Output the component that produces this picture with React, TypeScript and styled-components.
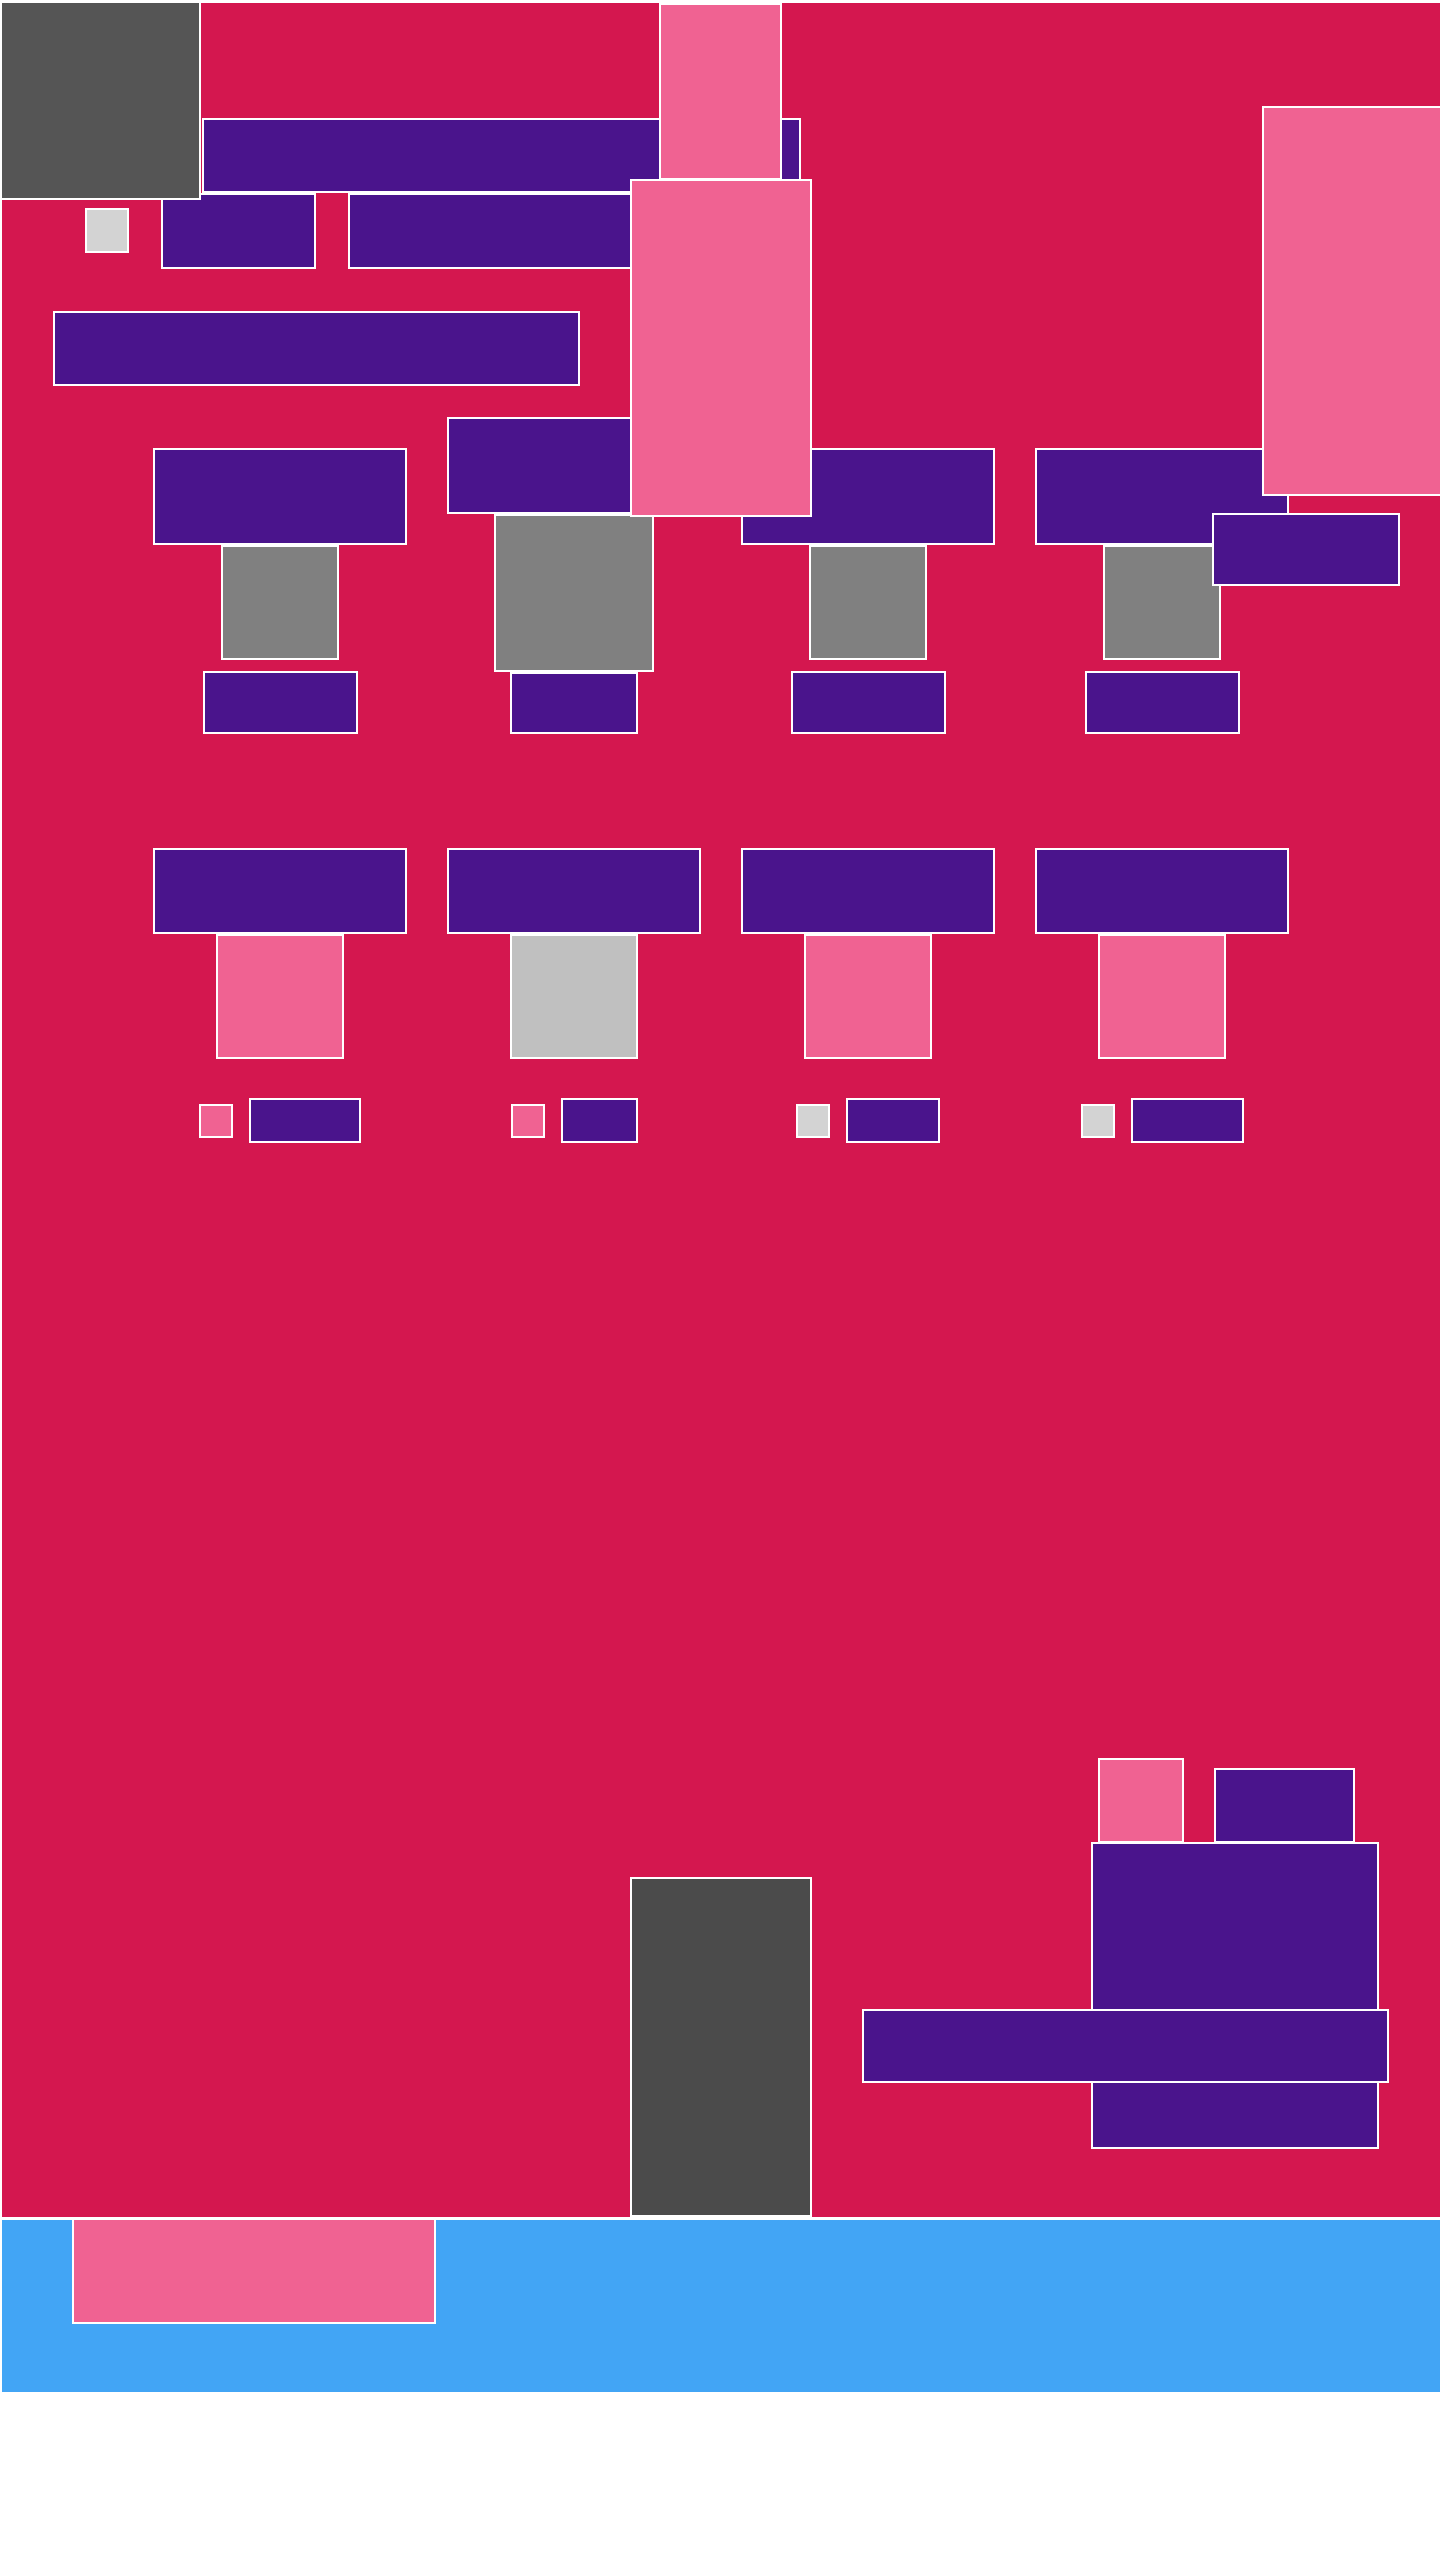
import React from "react";
import styled, { createGlobalStyle } from "styled-components";

const C = {
  red: "#D4174F",
  purple: "#4A148C",
  pink: "#F06292",
  blue: "#42A5F5",
  dark: "#555555",
  darker: "#4B4B4B",
  gray: "#808080",
  silver: "#C0C0C0",
  light: "#D3D3D3",
};

const Global = createGlobalStyle`
  html, body { margin: 0; padding: 0; background: #fff; font-family: "Liberation Sans", Arial, sans-serif; }
`;

const Tile = styled.div<{ $bg: string; $w: number; $h: number }>`
  box-sizing: border-box;
  flex-shrink: 0;
  width: ${(p) => p.$w}px;
  height: ${(p) => p.$h}px;
  background: ${(p) => p.$bg};
  border: 2px solid #fff;
`;

const Overlay = styled(Tile)<{ $x: number; $y: number; $z?: number }>`
  position: absolute;
  left: ${(p) => p.$x}px;
  top: ${(p) => p.$y}px;
  z-index: ${(p) => p.$z ?? 3};
`;

const Main = styled.main`
  position: relative;
  box-sizing: content-box;
  height: 2214px;
  background: ${C.red};
  border-top: 3px solid #fff;
  border-left: 2px solid #fff;
  border-bottom: 3px solid #fff;
  overflow: hidden;
`;

const HeaderTop = styled.div`
  display: flex;
  align-items: flex-end;
  height: 190px;
`;

const Logo = styled(Tile)`
  align-self: flex-start;
  position: relative;
  z-index: 2;
  border-top: 0;
  border-left: 0;
`;

const TopBar = styled(Tile)`
  margin-left: 1px;
`;

const HeaderMid = styled.div`
  display: flex;
  align-items: flex-start;
  height: 76px;
`;

const Check = styled(Tile)`
  margin: 15px 0 0 83px;
`;

const NavItem = styled(Tile)`
  margin-left: 32px;
`;

const SearchBar = styled(Tile)`
  margin: 42px 0 0 51px;
`;

const CardRow = styled.div<{ $mt: number; $align: string }>`
  display: flex;
  justify-content: center;
  gap: 40px;
  align-items: ${(p) => p.$align};
  margin-top: ${(p) => p.$mt}px;
`;

const Card = styled.div`
  width: 254px;
  display: flex;
  flex-direction: column;
  align-items: center;
`;

const CardFoot = styled(Tile)<{ $gap: number }>`
  margin-top: ${(p) => p.$gap}px;
`;

const MetaRow = styled.div`
  display: flex;
  align-items: center;
  gap: 16px;
  height: 45px;
  margin-top: 39px;
`;

const BottomArea = styled.div`
  display: flex;
  align-items: flex-start;
  height: 1074px;
`;

const Pillar = styled(Tile)`
  align-self: flex-end;
  margin-left: 628px;
`;

const Cluster = styled.div`
  position: relative;
  width: 527px;
  margin: 615px 0 0 50px;
`;

const ClusterTop = styled.div`
  display: flex;
  align-items: flex-start;
  padding-left: 236px;
`;

const ClusterTab = styled(Tile)`
  margin: 10px 0 0 30px;
`;

const ClusterBody = styled(Tile)`
  margin: -1px 0 0 229px;
`;

const Footer = styled.footer`
  box-sizing: content-box;
  height: 172px;
  background: ${C.blue};
  border-left: 2px solid #fff;
  padding-left: 70px;
`;

const FooterCard = styled(Tile)`
  border-top: 0;
`;

const row1 = [
  { grayW: 118, grayH: 115, gap: 11, footW: 155, footH: 63 },
  { grayW: 160, grayH: 158, gap: 0, footW: 128, footH: 62 },
  { grayW: 118, grayH: 115, gap: 11, footW: 155, footH: 63 },
  { grayW: 118, grayH: 115, gap: 11, footW: 155, footH: 63 },
];

const row2 = [
  { mid: C.pink, dot: C.pink, tagW: 112 },
  { mid: C.silver, dot: C.pink, tagW: 77 },
  { mid: C.pink, dot: C.light, tagW: 94 },
  { mid: C.pink, dot: C.light, tagW: 113 },
];

export default function App() {
  return (
    <>
      <Global />
      <Main>
        <HeaderTop>
          <Logo $bg={C.dark} $w={199} $h={197} />
          <TopBar $bg={C.purple} $w={599} $h={75} />
        </HeaderTop>
        <HeaderMid>
          <Check $bg={C.light} $w={44} $h={45} />
          <NavItem $bg={C.purple} $w={155} $h={76} />
          <NavItem $bg={C.purple} $w={292} $h={76} />
        </HeaderMid>
        <SearchBar $bg={C.purple} $w={527} $h={75} />

        <CardRow $mt={31} $align="flex-end">
          {row1.map((c, i) => (
            <Card key={i}>
              <Tile $bg={C.purple} $w={254} $h={97} />
              <Tile $bg={C.gray} $w={c.grayW} $h={c.grayH} />
              <CardFoot $gap={c.gap} $bg={C.purple} $w={c.footW} $h={c.footH} />
            </Card>
          ))}
        </CardRow>

        <CardRow $mt={114} $align="flex-start">
          {row2.map((c, i) => (
            <Card key={i}>
              <Tile $bg={C.purple} $w={254} $h={86} />
              <Tile $bg={c.mid} $w={128} $h={125} />
              <MetaRow>
                <Tile $bg={c.dot} $w={34} $h={34} />
                <Tile $bg={C.purple} $w={c.tagW} $h={45} />
              </MetaRow>
            </Card>
          ))}
        </CardRow>

        <BottomArea>
          <Pillar $bg={C.darker} $w={182} $h={340} />
          <Cluster>
            <ClusterTop>
              <Tile $bg={C.pink} $w={86} $h={85} />
              <ClusterTab $bg={C.purple} $w={141} $h={75} />
            </ClusterTop>
            <ClusterBody $bg={C.purple} $w={288} $h={307} />
            <Overlay $x={0} $y={251} $bg={C.purple} $w={527} $h={74} />
          </Cluster>
        </BottomArea>

        <Overlay $x={657} $y={0} $bg={C.pink} $w={123} $h={177} />
        <Overlay $x={628} $y={176} $z={4} $bg={C.pink} $w={182} $h={338} />
        <Overlay $x={1260} $y={103} $bg={C.pink} $w={180} $h={390} />
        <Overlay $x={1210} $y={510} $bg={C.purple} $w={188} $h={73} />
      </Main>
      <Footer>
        <FooterCard $bg={C.pink} $w={364} $h={104} />
      </Footer>
    </>
  );
}
